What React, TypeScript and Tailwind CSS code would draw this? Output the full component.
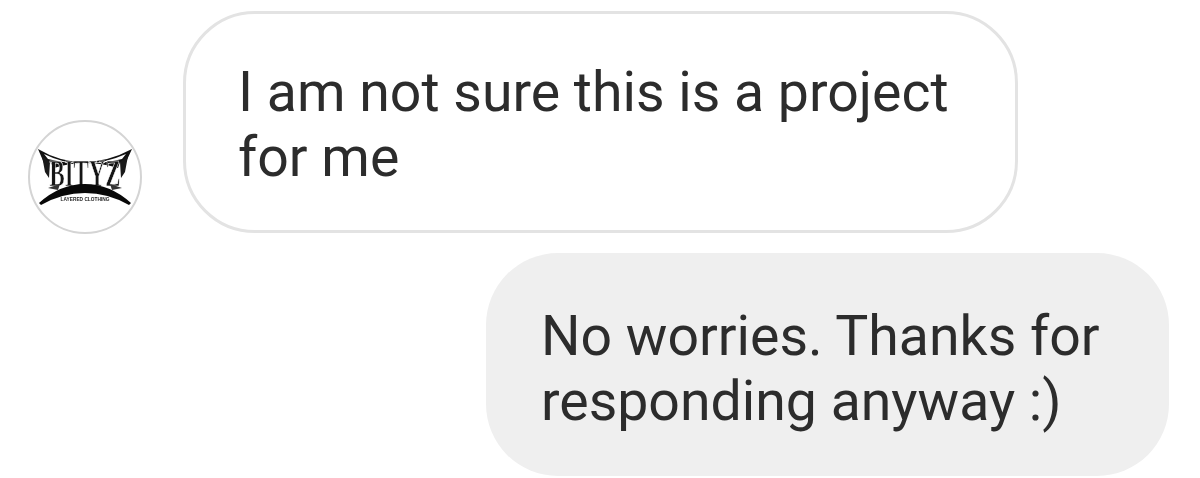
import React from 'react';

const AvatarLogo = () => (
  <svg viewBox="0 0 110 110" className="w-full h-full" style={{ filter: 'blur(0.7px)' }}>
    {/* top wings with thin dipping edge */}
    <path d="M8 27 Q30 40 53 40 Q78 40 102 27 L96 40 L90 40 L88 46 Q55 36 24 46 L20 40 L14 41 Z" fill="#111" />
    <path d="M14 32 Q32 41 53 42 Q76 41 96 32 L92 37 Q55 46 18 37 Z" fill="#fff" />
    <path d="M12 34 L20 40 L19 56 L15 50 Z M98 34 L90 40 L91 56 L95 50 Z" fill="#1a1a1a" />
    <g transform="translate(55 64) scale(0.6 1)">
      <text textAnchor="middle" fontFamily="'Liberation Serif', serif" fontWeight="700" fontSize="38" fill="#151515" stroke="#fff" strokeWidth="0.7">BITYZ</text>
    </g>
    {/* small shapes beside the letters */}
    <path d="M18 66 L30 62 L28 68 Z M92 66 L80 62 L82 68 Z" fill="#333" />
    {/* thick lower arc */}
    <path d="M9 81 Q30 62 55 62 Q80 62 101 81 L99 83 Q78 71 55 71 Q32 71 11 83 Z" fill="#080808" />
    <g transform="translate(55 79) scale(0.8 1)">
      <text textAnchor="middle" fontFamily="'Liberation Sans', sans-serif" fontWeight="700" fontSize="6" fill="#222">LAYERED CLOTHING</text>
    </g>
  </svg>
);

export default function App() {
  return (
    <div className="w-[1200px] h-[478px] overflow-hidden bg-white pt-[11px] font-['Roboto',sans-serif] text-[55.4px] leading-[65px] text-[#2c2c2c]">
      <div className="flex items-end pl-[28px]">
        <div className="w-[114px] h-[114px] shrink-0 rounded-full border-2 border-[#d4d4d4] overflow-hidden mb-[-1px]">
          <AvatarLogo />
        </div>
        <div className="ml-[41px] w-[835px] h-[222px] rounded-[72px] border-[3px] border-[#e3e3e3] pl-[52px] pt-[46px]">
          <p>I am not sure this is a project<br />for me</p>
        </div>
      </div>
      <div className="flex justify-end pr-[31px] mt-[20px]">
        <div className="w-[683px] h-[223px] rounded-[72px] bg-[#efefef] pl-[55px] pt-[51px]">
          <p>No worries. Thanks for<br />responding anyway :)</p>
        </div>
      </div>
    </div>
  );
}
